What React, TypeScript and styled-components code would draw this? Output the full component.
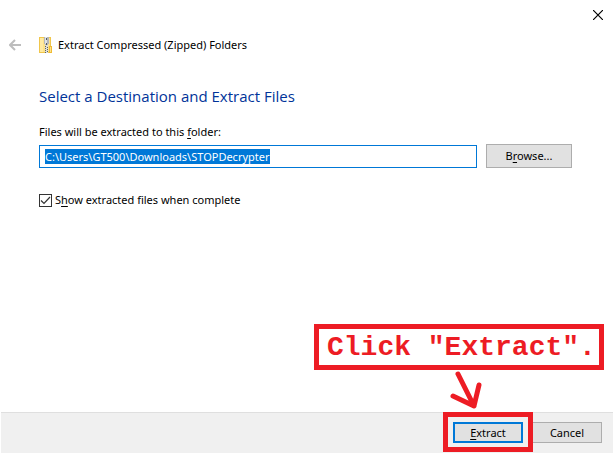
import React, { useEffect, useRef, useState } from "react";
import styled, { createGlobalStyle } from "styled-components";

const GlobalStyle = createGlobalStyle`
  * { box-sizing: border-box; }
  body {
    margin: 0;
    background: #fff;
    color: #000;
    font: 11px/16px "Noto Sans", "Open Sans", sans-serif;
  }
  button, input { font: inherit; color: inherit; }
`;

const Window = styled.div`
  display: flex;
  flex-direction: column;
  min-height: 100vh;
  padding: 0 1px 1px;
`;

const TitleBar = styled.div`
  display: flex;
  justify-content: flex-end;
  height: 30px;
`;

const IconButton = styled.button<{ $width: number }>`
  display: flex;
  align-items: center;
  justify-content: center;
  width: ${(p) => p.$width}px;
  height: 30px;
  padding: 0;
  border: 0;
  background: transparent;
`;

const Header = styled.header`
  display: flex;
  align-items: center;
  height: 30px;
`;

const HeaderIcon = styled.span`
  display: flex;
  margin-left: 10px;
`;

const HeaderTitle = styled.span`
  margin-left: 6px;
`;

const Content = styled.main`
  flex: 1;
  padding: 24px 41px 40px 38px;
`;

const Heading = styled.h1`
  margin: 0 0 16px;
  color: #003399;
  font-family: "Open Sans", sans-serif;
  font-size: 15px;
  font-weight: 400;
  line-height: 24px;
`;

const FieldLabel = styled.label`
  display: block;
  margin-bottom: 4px;
`;

const FieldRow = styled.div`
  display: flex;
  align-items: flex-end;
  gap: 9px;
  margin-bottom: 24px;
`;

const PathInput = styled.input`
  flex: 1;
  min-width: 0;
  height: 23px;
  padding: 0 5px;
  border: 1px solid #0078d7;
  border-radius: 0;
  outline: 0;
  background: #fff;
  line-height: 15px;
  &::selection {
    background: #0078d7;
    color: #fff;
  }
`;

const Button = styled.button<{ $width: number; $height: number; $primary?: boolean }>`
  width: ${(p) => p.$width}px;
  height: ${(p) => p.$height}px;
  padding: 0;
  border: ${(p) => (p.$primary ? "2px solid #0078d7" : "1px solid #adadad")};
  background: #e1e1e1;
  line-height: 16px;
`;

const Key = styled.span`
  text-decoration: underline;
  text-underline-offset: 2px;
  text-decoration-thickness: 1px;
  text-decoration-skip-ink: none;
`;

const CheckLabel = styled.label`
  display: flex;
  align-items: center;
  gap: 3px;
`;

const CheckBox = styled.input`
  appearance: none;
  width: 13px;
  height: 13px;
  margin: 0;
  border: 1px solid #333;
  background: #fff;
  &:checked {
    background: #fff
      url("data:image/svg+xml,%3Csvg xmlns='http://www.w3.org/2000/svg' viewBox='0 0 11 11'%3E%3Cpath d='M1 5.5 4 8.500l6-6.500' fill='none' stroke='%23333' stroke-width='1.2'/%3E%3C/svg%3E")
      center / 11px 11px no-repeat;
  }
`;

const Footer = styled.footer`
  display: flex;
  justify-content: flex-end;
  gap: 9px;
  height: 41px;
  padding: 9px 11px 10px;
  border-top: 1px solid #dfdfdf;
  background: #f0f0f0;
`;

const Target = styled.div`
  position: relative;
`;

const Highlight = styled.div`
  position: absolute;
  inset: -10px -10px -9px;
  border: 5px solid #ed1c24;
  pointer-events: none;
`;

const Callout = styled.div`
  position: absolute;
  right: -81px;
  bottom: 73px;
  width: 290px;
  height: 46px;
  padding-left: 8px;
  border: 5px solid #ed1c24;
  background: #fff;
  color: #ed1c24;
  font: bold 28px/38px "Liberation Mono", "Courier New", monospace;
  white-space: nowrap;
`;

const Arrow = styled.svg`
  position: absolute;
  left: -3px;
  bottom: 33px;
  pointer-events: none;
`;

function ZipIcon() {
  return (
    <svg width="13" height="16" viewBox="0 0 13 16" shapeRendering="crispEdges" aria-hidden="true">
      <path d="M0 0h12v9h1v7H0z" fill="#f0c64c" />
      <path d="M1 1h10v14H1z" fill="#fde28a" />
      <path d="M1 1h3v14H1z" fill="#ffeaa2" />
      <path d="M10 9h3v7h-3z" fill="#efbb35" />
      <path d="M11 10h1v5h-1z" fill="#ffe28a" />
      <path d="M5 0h5v7H9v1H6V7H5z" fill="#b4b7ba" />
      <path d="M6 0h2v7H6z" fill="#dfe3e6" />
      <path d="M7 1h1v2H7zM7 6h1v2H7z" fill="#55595d" />
      <path d="M6 8h3v8H6z" fill="#dcdcd6" />
      <path d="M6 9h1v1H6zM8 10h1v1H8zM6 11h1v1H6zM8 12h1v1H8zM6 13h1v1H6zM8 14h1v1H8zM6 15h1v1H6z" fill="#5d6165" />
    </svg>
  );
}

export default function App() {
  const input = useRef<HTMLInputElement>(null);
  const [path, setPath] = useState("C:\\Users\\GT500\\Downloads\\STOPDecrypter");
  const [show, setShow] = useState(true);

  useEffect(() => {
    input.current?.focus();
    input.current?.select();
  }, []);

  return (
    <>
      <GlobalStyle />
      <Window>
        <TitleBar>
          <IconButton $width={31} aria-label="Close">
            <svg width="10" height="10" viewBox="0 0 10 10">
              <path d="M0 0l10 10M10 0L0 10" stroke="#000" strokeWidth="1.2" />
            </svg>
          </IconButton>
        </TitleBar>
        <Header>
          <IconButton $width={28} aria-label="Back">
            <svg width="12" height="12" viewBox="0 0 12 12">
              <path d="M12 6H1M6 1L1 6l5 5" fill="none" stroke="#bdbdbd" strokeWidth="2" />
            </svg>
          </IconButton>
          <HeaderIcon>
            <ZipIcon />
          </HeaderIcon>
          <HeaderTitle>Extract Compressed (Zipped) Folders</HeaderTitle>
        </Header>
        <Content>
          <Heading>Select a Destination and Extract Files</Heading>
          <FieldLabel htmlFor="path">
            Files will be extracted to this <Key>f</Key>older:
          </FieldLabel>
          <FieldRow>
            <PathInput
              id="path"
              ref={input}
              value={path}
              spellCheck={false}
              onChange={(e) => setPath(e.target.value)}
            />
            <Button $width={86} $height={24}>
              B<Key>r</Key>owse...
            </Button>
          </FieldRow>
          <CheckLabel htmlFor="show">
            <CheckBox
              id="show"
              type="checkbox"
              checked={show}
              onChange={(e) => setShow(e.target.checked)}
            />
            <span>
              S<Key>h</Key>ow extracted files when complete
            </span>
          </CheckLabel>
        </Content>
        <Footer>
          <Target>
            <Button $width={70} $height={21} $primary>
              <Key>E</Key>xtract
            </Button>
            <Highlight />
            <Callout>Click "Extract".</Callout>
            <Arrow width="32" height="40" viewBox="0 0 32 40" aria-hidden="true">
              <path
                d="M8 4L24 36M3 26l21 10M29 15l-5 21"
                fill="none"
                stroke="#ed1c24"
                strokeWidth="5"
                strokeLinecap="round"
                strokeLinejoin="round"
              />
            </Arrow>
          </Target>
          <Button $width={70} $height={21}>
            Cancel
          </Button>
        </Footer>
      </Window>
    </>
  );
}
